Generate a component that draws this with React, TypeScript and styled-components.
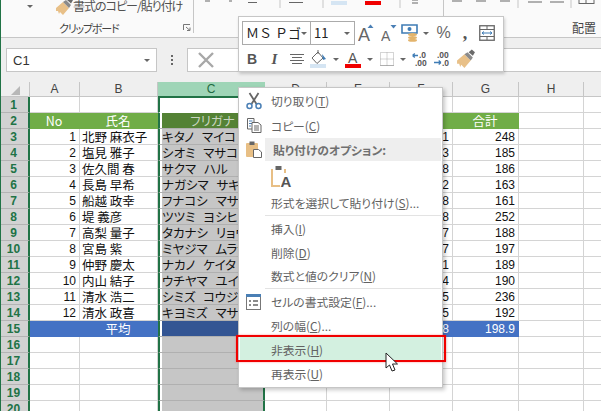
import React from 'react';
import styled, { createGlobalStyle } from 'styled-components';

const JP = `"Noto Sans CJK JP", "Liberation Sans", sans-serif`;
const LAT = `"Liberation Sans", "Noto Sans CJK JP", sans-serif`;
const GREEN = '#217346';

const Global = createGlobalStyle`
  html, body { margin: 0; padding: 0; background: #fff; }
  * { box-sizing: border-box; }
`;

const Page = styled.div`
  position: relative;
  width: 601px;
  height: 411px;
  overflow: hidden;
  border-left: 1px solid ${GREEN};
  display: flex;
  flex-direction: column;
  font-family: ${LAT};
  background: #fff;
`;

/* ---------- ribbon ---------- */
const Ribbon = styled.div`
  flex: none;
  height: 38px;
  display: flex;
  background: #fafafa;
  border-bottom: 1px solid #c6c6c6;
  overflow: hidden;
`;
const RibbonGroup = styled.div<{ $w?: number }>`
  flex: ${p => (p.$w ? `none` : 1)};
  width: ${p => (p.$w ? `${p.$w}px` : 'auto')};
  height: 33px;
  border-right: 1px solid #c6c6c6;
  display: flex;
  flex-direction: column;
  justify-content: space-between;
  &:last-child { border-right: none; }
`;
const CopyFormatRow = styled.div`
  display: flex;
  align-items: center;
  height: 12px;
  padding-left: 26px;
  gap: 22px;
`;
const CopyFormatText = styled.span`
  margin-left: -23px;
  font: 12px/12px ${JP};
  color: #505050;
  white-space: nowrap;
  font-feature-settings: "palt";
  letter-spacing: -1px;
`;
const GroupLabelRow = styled.div<{ $pad?: number; $right?: boolean }>`
  display: flex;
  align-items: center;
  justify-content: ${p => (p.$right ? 'flex-end' : 'flex-start')};
  padding-left: ${p => p.$pad ?? 0}px;
  padding-right: ${p => (p.$right ? 5 : 0)}px;
  height: 17px;
  margin-bottom: -3px;
`;
const GroupLabel = styled.span<{ $tight?: boolean }>`
  font: ${p => (p.$tight ? 11 : 12)}px/16px ${JP};
  color: #444;
  font-feature-settings: "palt";
  letter-spacing: ${p => (p.$tight ? '-1.2px' : '0')};
  white-space: nowrap;
`;
const Launcher = styled.svg`
  margin-left: 65px;
  flex: none;
`;

/* ---------- formula bar ---------- */
const FormulaBar = styled.div`
  flex: none;
  height: 44px;
  background: #efefef;
  display: flex;
  align-items: flex-start;
  padding: 10px 0 0 5px;
`;
const NameBox = styled.div`
  width: 151px;
  height: 24px;
  background: #fff;
  border: 1px solid #c6c6c6;
  display: flex;
  align-items: center;
  justify-content: space-between;
  padding: 0 6px;
  font-size: 13px;
  color: #333;
`;
const DownCaret = styled.i<{ $c?: string; $s?: number }>`
  display: block;
  width: 0;
  height: 0;
  border-left: ${p => p.$s ?? 3}px solid transparent;
  border-right: ${p => p.$s ?? 3}px solid transparent;
  border-top: ${p => p.$s ?? 3}px solid ${p => p.$c ?? '#666'};
`;
const Dots = styled.div`
  width: 30px;
  height: 24px;
  display: flex;
  flex-direction: column;
  align-items: center;
  justify-content: center;
  gap: 2px;
  & > i { display: block; width: 2px; height: 2px; background: #666; }
`;
const FormulaInput = styled.div`
  flex: 1;
  height: 24px;
  background: #fff;
  border: 1px solid #c6c6c6;
  border-right: none;
  display: flex;
  align-items: center;
  padding-left: 10px;
`;

/* ---------- sheet ---------- */
const Sheet = styled.div`
  flex: 1;
  display: grid;
  grid-template-columns: 29px 50px 78px 107px 62px 63px 63px 66px 65px 40px;
  grid-template-rows: 15px;
  grid-auto-rows: 16px;
  overflow: hidden;
`;
const Corner = styled.div`
  background: #efefef;
  border-right: 1px solid #c6c6c6;
  border-bottom: 1px solid #c6c6c6;
  display: flex;
  align-items: flex-end;
  justify-content: flex-end;
  padding: 0 9px 1px 0;
`;
const ColHead = styled.div<{ $active?: boolean }>`
  background: ${p => (p.$active ? '#9fd5b7' : '#efefef')};
  color: ${p => (p.$active ? '#1f6b42' : '#444')};
  border-right: 1px solid ${p => (p.$active ? '#9fd5b7' : '#c6c6c6')};
  border-bottom: 1px solid ${p => (p.$active ? GREEN : '#c6c6c6')};
  font-size: 12px;
  line-height: 14px;
  text-align: center;
`;
const RowHead = styled.div`
  background: #d2d2d2;
  color: ${GREEN};
  border-right: 2px solid ${GREEN};
  border-bottom: 1px solid #b4b4b4;
  font: bold 12px/17px ${LAT};
  text-align: center;
  padding-right: 2px;
`;
const Cell = styled.div<{ $fill?: string; $ink?: string; $align?: string; $line?: string }>`
  background: ${p => p.$fill ?? '#fff'};
  color: ${p => p.$ink ?? '#111'};
  text-align: ${p => p.$align ?? 'left'};
  border-right: 1px solid ${p => p.$line ?? '#d4d4d4'};
  border-bottom: 1px solid ${p => p.$line ?? '#d4d4d4'};
  padding: 0 3px 0 2px;
  font: 12.5px/15px ${JP};
  white-space: nowrap;
  overflow: hidden;
`;
const NumCell = styled(Cell)`
  font: 12px/16px ${LAT};
  text-align: right;
`;
const SelCell = styled.div<{ $fill?: string; $ink?: string; $first?: boolean; $center?: boolean }>`
  background: ${p => p.$fill ?? '#c6c6c6'};
  background-clip: padding-box;
  color: ${p => p.$ink ?? '#111'};
  border-left: 2px solid ${GREEN};
  border-right: 2px solid ${GREEN};
  border-bottom: 1px solid ${p => (p.$first ? '#fff' : '#b0b0b0')};
  box-shadow: inset 2px 0 0 #fff;
  padding-left: 2px;
  font: 12.5px/15px ${JP};
  font-feature-settings: "palt";
  word-spacing: 5px;
  white-space: nowrap;
  overflow: hidden;
  text-align: ${p => (p.$center ? 'center' : 'left')};
  ${p => (p.$first ? `border-top: 1px solid ${GREEN}; box-shadow: none;` : '')}
`;

/* ---------- mini toolbar ---------- */
const MiniBar = styled.div`
  position: absolute;
  left: 237px;
  top: 16px;
  width: 266px;
  height: 56px;
  background: #fff;
  border: 1px solid #c6c6c6;
  box-shadow: 1px 2px 3px rgba(0, 0, 0, 0.18);
  padding: 4px 0 0 3px;
  display: flex;
  flex-direction: column;
  gap: 2px;
`;
const MiniRow = styled.div`
  display: flex;
  align-items: center;
  height: 24px;
`;
const FontBox = styled.div<{ $w: number }>`
  width: ${p => p.$w}px;
  height: 24px;
  border: 1px solid #ababab;
  margin-right: -1px;
  display: flex;
  align-items: center;
  justify-content: space-between;
  padding: 0 4px 0 3px;
  font: 13px/22px ${JP};
  color: #222;
  white-space: nowrap;
`;
const Slot = styled.div<{ $w: number }>`
  flex: none;
  width: ${p => p.$w}px;
  height: 24px;
  display: flex;
  align-items: center;
  justify-content: center;
`;
const Letter = styled.span<{ $size?: number; $italic?: boolean; $serif?: boolean }>`
  font-family: ${p => (p.$serif ? `"Liberation Serif", serif` : LAT)};
  font-size: ${p => p.$size ?? 14}px;
  font-style: ${p => (p.$italic ? 'italic' : 'normal')};
  font-weight: 700;
  color: #555;
  line-height: 1;
`;
const PlainGlyph = styled(Letter)`
  font-weight: 400;
  color: #666;
`;

/* ---------- context menu ---------- */
const Menu = styled.div`
  position: absolute;
  left: 237px;
  top: 87px;
  width: 205px;
  background: #fff;
  border: 1px solid #c6c6c6;
  box-shadow: 2px 2px 4px rgba(0, 0, 0, 0.22);
  padding: 1px;
  display: flex;
  flex-direction: column;
`;
const Item = styled.div<{ $h?: number; $hot?: boolean }>`
  height: ${p => p.$h ?? 24}px;
  display: flex;
  align-items: center;
  background: ${p => (p.$hot ? '#d3f0e0' : 'transparent')};
  font: 11.8px/16px ${JP};
  color: #626262;
  font-feature-settings: "palt";
  white-space: nowrap;
  & u { text-underline-offset: 1px; }
`;
const ItemIcon = styled.div`
  flex: none;
  width: 31px;
  display: flex;
  justify-content: center;
  padding-right: 4px;
`;
const SectionHead = styled.div`
  flex: 1;
  align-self: stretch;
  margin-left: -6px;
  padding-left: 8px;
  background: #eeeeee;
  font-weight: 600;
  line-height: 23px;
  color: #707070;
`;
const Sep = styled.div`
  height: 2px;
  margin-left: 25px;
  background: #e3e3e3;
  border-bottom: 1px solid #fff;
`;
const RedFrame = styled.div`
  position: absolute;
  left: 235px;
  top: 335px;
  width: 210px;
  height: 27px;
  border: 2px solid #f00000;
  box-shadow: 0 0 2px rgba(255, 60, 60, 0.5);
  pointer-events: none;
`;
const Cursor = styled.svg`
  position: absolute;
  left: 384px;
  top: 352px;
`;

/* ---------- icons ---------- */
const Brush = ({ w = 19 }: { w?: number }) => (
  <svg width={w} height={w} viewBox="0 0 19 19">
    <path d="M1 11 L8 5 L14 11 L8 18 L5 15 L4 17 L3 14 L1 14 Z" fill="#e8c088" />
    <path d="M8 5 L11 3 L16 8 L14 11 Z" fill="#8a8a8a" />
    <path d="M12 3 L15 0.5 L18 3 L16 6.5 Z" fill="#6a6a6a" />
  </svg>
);
const Scissors = () => (
  <svg width="16" height="18" viewBox="0 0 16 18">
    <path d="M3.5 1 L10.5 12 M12.5 1 L5.5 12" stroke="#666" strokeWidth="1.8" fill="none" />
    <circle cx="3.5" cy="14" r="2.5" stroke="#4a7fb5" strokeWidth="1.5" fill="none" />
    <circle cx="12.5" cy="14" r="2.5" stroke="#4a7fb5" strokeWidth="1.5" fill="none" />
  </svg>
);
const CopyIcon = () => (
  <svg width="16" height="15" viewBox="0 0 16 15">
    <path d="M1.5 .5 H8 V11 H1.5 Z" fill="#fff" stroke="#666" />
    <path d="M3 3 H6.5 M3 5.5 H6.5 M3 8 H5" stroke="#4a7fb5" />
    <path d="M6 4.5 H12 L15 7 V14.5 H6 Z" fill="#fff" stroke="#666" />
    <path d="M8 8 H13 M8 10 H13 M8 12 H13" stroke="#666" />
  </svg>
);
const ClipIcon = () => (
  <svg width="16" height="17" viewBox="0 0 16 17">
    <rect x="0" y="2" width="12" height="14" rx="1" fill="#e8bf85" />
    <rect x="3.5" y="0.5" width="5" height="3.5" fill="#666" />
    <path d="M7.5 8.5 H12.5 L15.5 11 V16.5 H7.5 Z" fill="#fff" stroke="#666" />
  </svg>
);
const PasteA = () => (
  <svg width="22" height="23" viewBox="0 0 22 23">
    <path d="M2 3 H13 V9 H9 V20 H2 Z" fill="#fff" />
    <path d="M1 4 V21 H9 M14 4 V8" stroke="#e8bf85" strokeWidth="2" fill="none" />
    <rect x="4.5" y="1" width="6" height="4" fill="#666" />
    <text x="9.5" y="21.5" fontFamily="Liberation Sans" fontWeight="700" fontSize="15" fill="#555">A</text>
  </svg>
);
const FormatCells = () => (
  <svg width="15" height="16" viewBox="0 0 15 16">
    <rect x=".5" y=".5" width="14" height="15" fill="#fff" stroke="#777" />
    <rect x="0" y="0" width="15" height="3" fill="#4a7fb5" />
    <path d="M3 7 H5 M7 7 H12 M3 11 H5 M7 11 H12" stroke="#666" strokeWidth="1.4" />
  </svg>
);
const GrowA = ({ up, size }: { up: boolean; size: number }) => (
  <svg width="16" height="18" viewBox="0 0 16 18">
    <text x="0" y="17" fontFamily="Liberation Sans" fontSize={size} fill="#666">A</text>
    <path d={up ? 'M9.5 4 L12.5 0.5 L15.5 4 Z' : 'M9.5 1 L12.5 4.5 L15.5 1 Z'} fill="#4a7fb5" />
  </svg>
);
const Currency = () => (
  <svg width="18" height="18" viewBox="0 0 18 18">
    <path d="M1 1 H16 V9 H1 Z" fill="none" stroke="#3f7cb5" strokeWidth="1.6" />
    <circle cx="8.5" cy="5" r="2" fill="#3f7cb5" />
    <ellipse cx="11.5" cy="10.5" rx="4.5" ry="1.6" fill="#e3b46c" />
    <ellipse cx="11.5" cy="13.5" rx="4.5" ry="1.6" fill="#e3b46c" />
    <ellipse cx="11.5" cy="16.3" rx="4.5" ry="1.5" fill="#e3b46c" />
  </svg>
);
const ColWidth = () => (
  <svg width="16" height="16" viewBox="0 0 16 16">
    <rect x=".75" y=".75" width="14.5" height="14.5" fill="#fff" stroke="#666" strokeWidth="1.3" />
    <path d="M1 4.5 H15 M1 11.5 H15 M8 1 V4.5 M8 11.5 V15" stroke="#666" />
    <path d="M3 8 H13 M3 8 L5 6.5 M3 8 L5 9.5 M13 8 L11 6.5 M13 8 L11 9.5" stroke="#3f7cb5" fill="none" />
  </svg>
);
const AlignLines = () => (
  <svg width="14" height="11" viewBox="0 0 14 11">
    <path d="M0 .5 H14 M2 3.5 H12 M0 6.5 H14 M2 9.5 H12" stroke="#666" />
  </svg>
);
const FillIcon = () => (
  <svg width="17" height="18" viewBox="0 0 17 18">
    <path d="M2 8 L8 2 L13 8 L7 13.5 Z" fill="#fff" stroke="#666" />
    <path d="M8 0 V4" stroke="#666" />
    <path d="M12 4 L16 9 L13 10 Z" fill="#3f7cb5" />
    <rect x="0" y="14" width="16" height="4" fill="#d5e5f3" />
  </svg>
);
const FontColor = () => (
  <svg width="16" height="18" viewBox="0 0 16 18">
    <text x="3" y="13" fontFamily="Liberation Sans" fontSize="14" fill="#555">A</text>
    <rect x="0" y="14" width="16" height="4" fill="#f00000" />
  </svg>
);
const BorderIcon = () => (
  <svg width="14" height="14" viewBox="0 0 14 14">
    <path d="M.5 .5 H13.5 V13.5 H.5 Z M7 .5 V13.5 M.5 7 H13.5" fill="none" stroke="#aaa" strokeDasharray="1 1" />
    <path d="M.5 13.5 H13.5" stroke="#888" strokeDasharray="1 1" />
  </svg>
);
const Decimal = ({ more }: { more: boolean }) => (
  <svg width="17" height="15" viewBox="0 0 17 15">
    <text x={more ? 7 : 3} y="6" fontFamily="Liberation Sans" fontSize="8.5" fontWeight="700" fill="#555">{more ? '.0' : '.00'}</text>
    <text x={more ? 3 : 8} y="14" fontFamily="Liberation Sans" fontSize="8.5" fontWeight="700" fill="#555">{more ? '.00' : '.0'}</text>
    {more ? (
      <path d="M.5 3.5 H6 M.5 3.5 L2.8 1.5 M.5 3.5 L2.8 5.5" stroke="#3f7cb5" strokeWidth="1.3" fill="none" />
    ) : (
      <path d="M0 10.5 H7 M7 10.5 L4.7 8.5 M7 10.5 L4.7 12.5" stroke="#3f7cb5" strokeWidth="1.3" fill="none" />
    )}
  </svg>
);

const rows: [string, string, string, string, string][] = [
  ['1', '北野 麻衣子', 'キタノ マイコ', '1', '248'],
  ['2', '塩見 雅子', 'シオミ マサコ', '3', '185'],
  ['3', '佐久間 春', 'サクマ ハル', '8', '186'],
  ['4', '長島 早希', 'ナガシマ サキ', '2', '163'],
  ['5', '船越 政幸', 'フナコシ マサユキ', '8', '161'],
  ['6', '堤 義彦', 'ツツミ ヨシヒコ', '8', '252'],
  ['7', '高梨 量子', 'タカナシ リョウコ', '7', '188'],
  ['8', '宮島 紫', 'ミヤジマ ムラサキ', '7', '197'],
  ['9', '仲野 慶太', 'ナカノ ケイタ', '1', '189'],
  ['10', '内山 結子', 'ウチヤマ ユイコ', '4', '190'],
  ['11', '清水 浩二', 'シミズ コウジ', '5', '236'],
  ['12', '清水 政喜', 'キヨミズ マサキ', '5', '192'],
];
const heads = ['A', 'B', 'C', 'D', 'E', 'F', 'G', 'H', 'I'];
const HG = '#70ad47';
const BL = '#4472c4';

const Blank = ({ n }: { n: number }) => (
  <>
    {Array.from({ length: n }).map((_, i) => (
      <Cell key={i} />
    ))}
  </>
);

export default function App() {
  return (
    <Page>
      <Global />
      <Ribbon>
        <RibbonGroup $w={193}>
          <CopyFormatRow>
            <DownCaret />
            <Brush />
            <CopyFormatText>書式のコピー/貼り付け</CopyFormatText>
          </CopyFormatRow>
          <GroupLabelRow $pad={58}>
            <GroupLabel $tight>クリップボード</GroupLabel>
            <Launcher width="8" height="7" viewBox="0 0 8 7">
              <path d="M.5 6 V.5 H7 M3 3 L7 6.5 M7 3.5 V6.5 H4" stroke="#777" fill="none" />
            </Launcher>
          </GroupLabelRow>
        </RibbonGroup>
        <RibbonGroup $w={250}>
          <svg width="250" height="8" viewBox="0 0 250 8">
            <path d="M11 1 H16 M35 1 H38 M54 2.5 H63 M95 2.5 H109" stroke="#666" fill="none" />
            <path d="M86 0 V8 M129 0 V8 M206 0 V8" stroke="#c6c6c6" />
            <rect x="137" y="1" width="16" height="4" fill="#d5e5f3" />
            <rect x="171" y="1" width="16" height="4" fill="#f00000" />
            <path d="M218 0 H224 M218 3 H224" stroke="#666" />
          </svg>
        </RibbonGroup>
        <RibbonGroup>
          <svg width="157" height="8" viewBox="0 0 157 8">
            <path d="M8 1 H18 M32 1 H42 M56 1 H66 M84 2 H98 M106 2 H120 M135 3.5 H150 M135 0 V4 M142 0 V4 M150 0 V4" stroke="#666" fill="none" />
            <path d="M74 0 V8 M127 0 V8" stroke="#c6c6c6" />
          </svg>
          <GroupLabelRow $right>
            <GroupLabel>配置</GroupLabel>
          </GroupLabelRow>
        </RibbonGroup>
      </Ribbon>

      <FormulaBar>
        <NameBox>
          C1
          <DownCaret $s={3.5} />
        </NameBox>
        <Dots><i /><i /><i /></Dots>
        <FormulaInput>
          <svg width="16" height="16" viewBox="0 0 16 16">
            <path d="M1 1 L15 15 M15 1 L1 15" stroke="#a8a8a8" strokeWidth="2.4" />
          </svg>
        </FormulaInput>
      </FormulaBar>

      <Sheet>
        <Corner>
          <svg width="9" height="9" viewBox="0 0 9 9"><path d="M9 0 V9 H0 Z" fill="#b8b8b8" /></svg>
        </Corner>
        {heads.map(h => (
          <ColHead key={h} $active={h === 'C'}>{h}</ColHead>
        ))}

        <RowHead>1</RowHead>
        <Blank n={2} />
        <SelCell $fill="#fff" $first />
        <Blank n={6} />

        <RowHead>2</RowHead>
        <Cell $fill={HG} $ink="#fff" $align="center" $line={HG}>No</Cell>
        <Cell $fill={HG} $ink="#fff" $align="center" $line={HG}>氏名</Cell>
        <SelCell $fill="#548235" $ink="#c9d6c0" $center>フリガナ</SelCell>
        <Cell $fill={HG} $line={HG} />
        <Cell $fill={HG} $line={HG} />
        <Cell $fill={HG} $line={HG} />
        <Cell $fill={HG} $ink="#fff" $align="center" $line={HG}>合計</Cell>
        <Blank n={2} />

        {rows.map((r, i) => (
          <React.Fragment key={r[0]}>
            <RowHead>{i + 3}</RowHead>
            <NumCell>{r[0]}</NumCell>
            <Cell>{r[1]}</Cell>
            <SelCell>{r[2]}</SelCell>
            <Blank n={2} />
            <NumCell>{r[3]}</NumCell>
            <NumCell>{r[4]}</NumCell>
            <Blank n={2} />
          </React.Fragment>
        ))}

        <RowHead>15</RowHead>
        <Cell $fill={BL} $line={BL} />
        <Cell $fill={BL} $ink="#fff" $align="center" $line={BL}>平均</Cell>
        <SelCell $fill="#335593" />
        <Cell $fill={BL} $line={BL} />
        <Cell $fill={BL} $line={BL} />
        <NumCell $fill={BL} $ink="#fff" $line={BL}>8</NumCell>
        <NumCell $fill={BL} $ink="#fff" $line={BL}>198.9</NumCell>
        <Blank n={2} />

        {[16, 17, 18, 19, 20].map(n => (
          <React.Fragment key={n}>
            <RowHead>{n}</RowHead>
            <Blank n={2} />
            <SelCell />
            <Blank n={6} />
          </React.Fragment>
        ))}
      </Sheet>

      <MiniBar>
        <MiniRow>
          <FontBox $w={69}>
            ＭＳ Ｐゴ
            <DownCaret />
          </FontBox>
          <FontBox $w={45}>
            11
            <DownCaret />
          </FontBox>
          <Slot $w={24}><GrowA up size={18} /></Slot>
          <Slot $w={22}><GrowA up={false} size={14} /></Slot>
          <Slot $w={19}><Currency /></Slot>
          <Slot $w={13}><DownCaret /></Slot>
          <Slot $w={23}><PlainGlyph $size={16}>%</PlainGlyph></Slot>
          <Slot $w={20}><Letter $size={18} $serif>,</Letter></Slot>
          <Slot $w={23}><ColWidth /></Slot>
        </MiniRow>
        <MiniRow>
          <Slot $w={20}><Letter>B</Letter></Slot>
          <Slot $w={25}><Letter $italic $serif $size={15}>I</Letter></Slot>
          <Slot $w={20}><AlignLines /></Slot>
          <Slot $w={23}><FillIcon /></Slot>
          <Slot $w={11}><DownCaret /></Slot>
          <Slot $w={24}><FontColor /></Slot>
          <Slot $w={10}><DownCaret /></Slot>
          <Slot $w={24}><BorderIcon /></Slot>
          <Slot $w={7}><DownCaret /></Slot>
          <Slot $w={28}><Decimal more /></Slot>
          <Slot $w={17}><Decimal more={false} /></Slot>
          <Slot $w={29}><Brush w={20} /></Slot>
        </MiniRow>
      </MiniBar>

      <Menu>
        <Item><ItemIcon><Scissors /></ItemIcon>切り取り(<u>T</u>)</Item>
        <Item $h={25}><ItemIcon><CopyIcon /></ItemIcon>コピー(<u>C</u>)</Item>
        <Item $h={23}><ItemIcon><ClipIcon /></ItemIcon><SectionHead>貼り付けのオプション:</SectionHead></Item>
        <Item $h={30}><ItemIcon /><PasteA /></Item>
        <Item><ItemIcon />形式を選択して貼り付け(<u>S</u>)...</Item>
        <Sep />
        <Item><ItemIcon />挿入(<u>I</u>)</Item>
        <Item $h={23}><ItemIcon />削除(<u>D</u>)</Item>
        <Item><ItemIcon />数式と値のクリア(<u>N</u>)</Item>
        <Sep />
        <Item><ItemIcon><FormatCells /></ItemIcon>セルの書式設定(<u>F</u>)...</Item>
        <Item $h={23}><ItemIcon />列の幅(<u>C</u>)...</Item>
        <Item $h={25} $hot><ItemIcon />非表示(<u>H</u>)</Item>
        <Item><ItemIcon />再表示(<u>U</u>)</Item>
      </Menu>
      <RedFrame />
      <Cursor width="14" height="21" viewBox="0 0 14 21">
        <path d="M1 1 V16 L4.5 13 L7 19 L10 18 L7.5 12 L12.5 12 Z" fill="#fff" stroke="#222" strokeWidth="1" />
      </Cursor>
    </Page>
  );
}
